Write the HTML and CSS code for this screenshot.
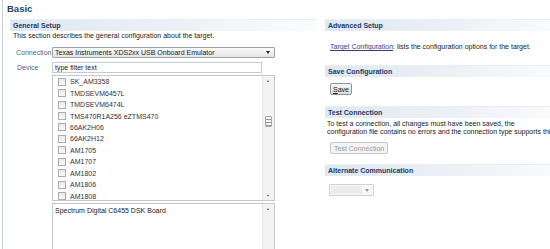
FILE: index.html
```html
<!DOCTYPE html>
<html lang="en">
<head>
    <meta charset="UTF-8">
    <title>Basic</title>
    <link rel="stylesheet" href="styles.css">
</head>
<body>
    <div class="editor">
        <h1 class="page-title">Basic</h1>

        <div class="columns">
            <!-- left column -->
            <section class="left">
                <h2 class="section-head">General Setup</h2>
                <p class="intro">This section describes the general configuration about the target.</p>

                <div class="form">
                    <label class="field-label">Connection</label>
                    <div class="combo">
                        <span class="combo-text">Texas Instruments XDS2xx USB Onboard Emulator</span>
                        <span class="combo-arrow"></span>
                    </div>

                    <label class="field-label device-label">Device</label>
                    <div class="device-box">
                        <div class="filter">type filter text</div>
                        <div class="list">
                            <ul class="items">
                                <li><span class="check"></span>SK_AM3358</li>
                                <li><span class="check"></span>TMDSEVM6457L</li>
                                <li><span class="check"></span>TMDSEVM6474L</li>
                                <li><span class="check"></span>TMS470R1A256 eZTMS470</li>
                                <li><span class="check"></span>66AK2H06</li>
                                <li><span class="check"></span>66AK2H12</li>
                                <li><span class="check"></span>AM1705</li>
                                <li><span class="check"></span>AM1707</li>
                                <li><span class="check"></span>AM1802</li>
                                <li><span class="check"></span>AM1806</li>
                                <li><span class="check"></span>AM1808</li>
                            </ul>
                            <div class="scrollbar">
                                <span class="arrow up"></span>
                                <span class="thumb"></span>
                                <span class="arrow down"></span>
                            </div>
                        </div>
                        <div class="description">
                            <p class="desc-text">Spectrum Digital C6455 DSK Board</p>
                            <div class="scrollbar">
                                <span class="arrow up"></span>
                                <span class="arrow down"></span>
                            </div>
                        </div>
                    </div>
                </div>
            </section>

            <!-- right column -->
            <section class="right">
                <h2 class="section-head">Advanced Setup</h2>
                <p class="link-line"><a href="#" class="link">Target Configuration</a>: lists the configuration options for the target.</p>

                <h2 class="section-head">Save Configuration</h2>
                <div class="btn-row">
                    <button class="btn"><u>S</u>ave</button>
                </div>

                <h2 class="section-head">Test Connection</h2>
                <p class="para">To test a connection, all changes must have been saved, the<br>configuration file contains no errors and the connection type supports this function.</p>
                <div class="btn-row test-row">
                    <button class="btn disabled">Test Connection</button>
                </div>

                <h2 class="section-head">Alternate Communication</h2>
                <div class="small-combo">
                    <span class="small-combo-field"></span>
                    <span class="combo-arrow light"></span>
                </div>
            </section>
        </div>
    </div>
</body>
</html>
```

FILE: styles.css
```css
body {
    margin: 0;
    padding: 0;
    background-color: #fff;
    font-family: 'Liberation Sans', Arial, sans-serif;
    font-size: 7px;
    color: #222;
    overflow: hidden;
}

.editor {
    margin-left: 2px;
    border-left: 1px solid #c9d1db;
    padding-left: 4px;
    height: 249px;
}

.page-title {
    margin: 0;
    padding-top: 3px;
    height: 16px;
    font-size: 9.5px;
    font-weight: bold;
    color: #1f3f68;
}

.columns {
    display: grid;
    grid-template-columns: 306px 240px;
    column-gap: 9px;
    padding-left: 3px;
}

.right {
    overflow: hidden;
}

.section-head {
    margin: 0;
    height: 11px;
    line-height: 11px;
    padding-left: 3px;
    font-size: 7px;
    font-weight: bold;
    color: #1c3a64;
    background: linear-gradient(to right, #dfe7f0, #eef2f7 60%, #fbfcfd);
    border-top: 1px solid #e9eef4;
}

/* left column */

.intro {
    margin: 0 0 0 3px;
    height: 9px;
    line-height: 9px;
}

.form {
    display: grid;
    grid-template-columns: 42px 223px;
    row-gap: 4px;
    margin-top: 7px;
}

.field-label {
    padding-left: 6px;
    line-height: 11px;
    color: #4b6890;
}

.device-label {
    padding-left: 7px;
}

.combo {
    display: flex;
    align-items: center;
    height: 9px;
    border: 1px solid #9aa4ae;
    background: linear-gradient(#fafafa, #e4e4e4);
    padding-left: 2px;
    border-radius: 1px;
}

.combo-text {
    flex: 1;
    white-space: nowrap;
}

.combo-arrow {
    width: 0;
    height: 0;
    margin-right: 4px;
    border-left: 2.5px solid transparent;
    border-right: 2.5px solid transparent;
    border-top: 3px solid #222;
}

.combo-arrow.light {
    border-top-color: #999;
}

.device-box {
    display: flex;
    flex-direction: column;
}

.filter {
    width: 206px;
    height: 9px;
    line-height: 9px;
    border: 1px solid #c6cbd0;
    padding-left: 2px;
    background-color: #fff;
}

.list {
    display: flex;
    height: 124px;
    border: 1px solid #c4c8cc;
    margin-top: 2px;
}

.items {
    flex: 1;
    list-style: none;
    margin: 0;
    padding: 0 0 0 5px;
    overflow: hidden;
}

.items li {
    display: flex;
    align-items: center;
    height: 11.45px;
    white-space: nowrap;
    color: #333;
}

.check {
    width: 6px;
    height: 6px;
    margin-right: 4px;
    border: 1px solid #a8acb0;
    background: linear-gradient(#e9e9e9, #fafafa);
}

.scrollbar {
    position: relative;
    width: 11px;
    background-color: #f3f3f3;
    border-left: 1px solid #e4e4e4;
}

.arrow {
    position: absolute;
    left: 4px;
    width: 0;
    height: 0;
    border-left: 1.5px solid transparent;
    border-right: 1.5px solid transparent;
}

.arrow.up {
    top: 4px;
    border-bottom: 2px solid #555;
}

.arrow.down {
    bottom: 3px;
    border-top: 2px solid #555;
}

.thumb {
    position: absolute;
    top: 40px;
    left: 2px;
    width: 5px;
    height: 9px;
    border: 1px solid #a5a9ad;
    background: repeating-linear-gradient(#f5f5f5 0 2px, #9a9a9a 2px 3px);
    border-radius: 1px;
}

.description {
    display: flex;
    height: 50px;
    margin-top: 2px;
    border: 1px solid #c4c8cc;
}

.desc-text {
    flex: 1;
    margin: 0;
    padding: 3px 0 0 2px;
}

/* right column */

.link-line {
    margin: 0;
    height: 34px;
    line-height: 32px;
    padding-left: 5px;
    white-space: nowrap;
}

.link {
    color: #3a3e80;
}

.btn-row {
    height: 29px;
    padding: 6px 0 0 5px;
    box-sizing: border-box;
}

.btn {
    font-family: 'Liberation Sans', Arial, sans-serif;
    font-size: 7px;
    color: #222;
    height: 12px;
    padding: 0 2px;
    border: 1px solid #8e959c;
    border-radius: 2px;
    background: linear-gradient(#f6f6f6, #dcdcdc);
}

.para {
    margin: 2px 0 0 2px;
    line-height: 8px;
    white-space: nowrap;
}

.test-row {
    height: 28px;
}

.btn.disabled {
    padding: 0 3px;
    color: #999;
    border-color: #c8c8c8;
    background: #f4f4f4;
}

.small-combo {
    display: flex;
    align-items: center;
    width: 43px;
    height: 10px;
    margin: 8px 0 0 4px;
    border: 1px solid #cfd3d7;
    background-color: #f7f7f7;
    border-radius: 1px;
}

.small-combo-field {
    width: 33px;
    height: 8px;
    margin: 0 3px 0 1px;
    background-color: #ececec;
}
```
